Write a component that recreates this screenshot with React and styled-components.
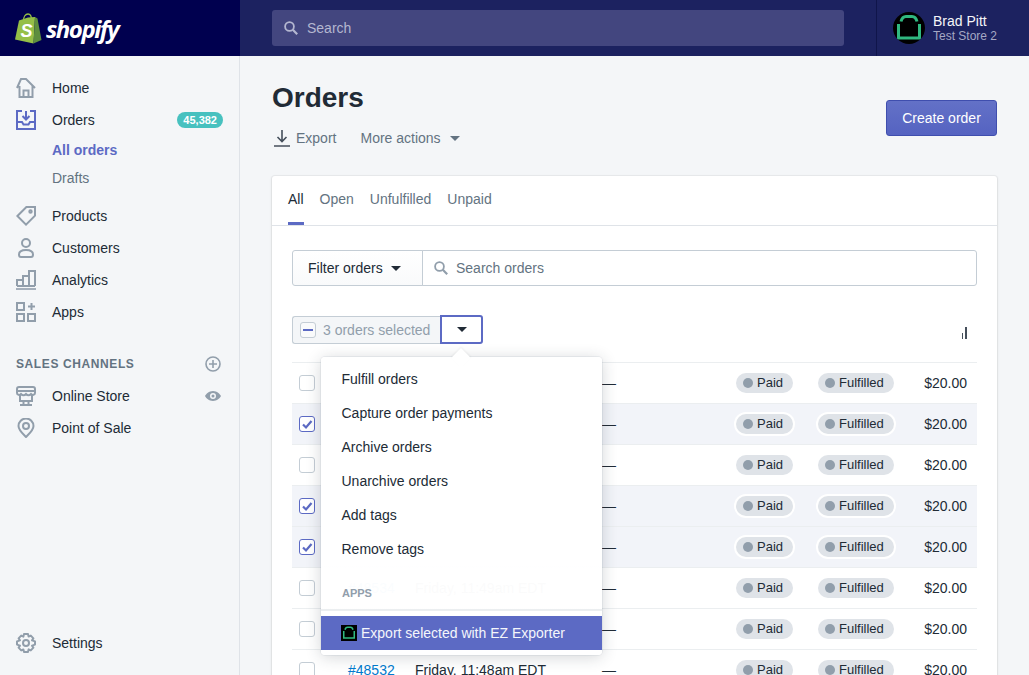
import styled, { createGlobalStyle } from "styled-components";

const GlobalStyle = createGlobalStyle`
  html, body {
    margin: 0;
    height: 100%;
    overflow: hidden;
    background: #f4f6f8;
    color: #212b36;
    font-family: "Liberation Sans", Arial, sans-serif;
    font-size: 14px;
  }
  * { box-sizing: border-box; }
`;

const HomeIcon = () => (
  <svg width="20" height="20" viewBox="0 0 20 20" fill="none" stroke="currentColor" strokeWidth="2">
    <path d="M1 10 L5 1 H10 L19 10 M3.5 8 V19 H16.5 V8 M7.5 19 V12.5 H12.5 V19" />
  </svg>
);
const OrdersIcon = () => (
  <svg width="20" height="20" viewBox="0 0 20 20" fill="none" stroke="currentColor" strokeWidth="2">
    <path d="M6 1 H1 V19 H19 V1 H14 M1 12 H6 L7.5 14.5 H12.5 L14 12 H19" />
    <path d="M10 1 V9 M6.5 6 L10 9.5 L13.5 6" />
  </svg>
);
const TagIcon = () => (
  <svg width="20" height="20" viewBox="0 0 20 20" fill="none" stroke="currentColor" strokeWidth="2">
    <path d="M1.4 10 L10.4 1 H19 V9.6 L10 18.6 Z" />
    <circle cx="14.5" cy="5.5" r="1.2" />
  </svg>
);
const PersonIcon = () => (
  <svg width="20" height="20" viewBox="0 0 20 20" fill="none" stroke="currentColor" strokeWidth="2">
    <circle cx="10" cy="5" r="4" />
    <path d="M3 16.5 C3 13.5 6 12 10 12 S17 13.5 17 16.5 C17 18.5 16 19 15 19 H5 C4 19 3 18.5 3 16.5 Z" />
  </svg>
);
const ChartIcon = () => (
  <svg width="20" height="20" viewBox="0 0 20 20" fill="none" stroke="currentColor" strokeWidth="2">
    <path d="M0 19 H20" strokeWidth="1.6" />
    <path d="M1 16 V10 H7 V16 M7 16 V6 H13 V16 M13 16 V1 H19 V16 M1 16 H19" />
  </svg>
);
const AppsIcon = () => (
  <svg width="20" height="20" viewBox="0 0 20 20" fill="none" stroke="currentColor" strokeWidth="2">
    <rect x="1" y="1" width="7" height="7" />
    <rect x="1" y="12" width="7" height="7" />
    <rect x="12" y="12" width="7" height="7" />
    <path d="M15.5 1 V8 M12 4.5 H19" />
  </svg>
);
const StoreIcon = () => (
  <svg width="20" height="20" viewBox="0 0 20 20" fill="none" stroke="currentColor" strokeWidth="2">
    <path d="M3 1 H17 C18.5 1 19 2 19 3 V7 C19 9 16.5 9.5 15 8 C13.5 9.5 11.5 9.5 10 8 C8.5 9.5 6.5 9.5 5 8 C3.5 9.5 1 9 1 7 V3 C1 2 1.5 1 3 1 Z" />
    <path d="M1 5 H19" />
    <path d="M4 9 V15 H16 V9 M4 19 H16 M7.5 15 V19 M12.5 15 V19" />
  </svg>
);
const PinIcon = () => (
  <svg width="20" height="20" viewBox="0 0 20 20" fill="none" stroke="currentColor" strokeWidth="2">
    <path d="M10 19 C6 15 2.5 12 2.5 8 A7.5 7.5 0 0 1 17.5 8 C17.5 12 14 15 10 19 Z" />
    <circle cx="10" cy="8" r="3" />
  </svg>
);
const GearIcon = () => (
  <svg width="20" height="20" viewBox="0 0 20 20" fill="none" stroke="currentColor" strokeWidth="2" strokeLinejoin="round">
    <path d="M8 1 H12 L12.6 3.6 L14.8 2.6 L17.4 5.4 L16 7.4 L19 8.4 V11.6 L16 12.6 L17.4 14.6 L14.8 17.4 L12.6 16.4 L12 19 H8 L7.4 16.4 L5.2 17.4 L2.6 14.6 L4 12.6 L1 11.6 V8.4 L4 7.4 L2.6 5.4 L5.2 2.6 L7.4 3.6 Z" />
    <circle cx="10" cy="10" r="3" />
  </svg>
);
const PlusCircle = () => (
  <svg width="16" height="16" viewBox="0 0 16 16" fill="none" stroke="currentColor" strokeWidth="1.6">
    <circle cx="8" cy="8" r="7" />
    <path d="M8 4 V12 M4 8 H12" />
  </svg>
);
const EyeIcon = () => (
  <svg width="16" height="16" viewBox="0 0 16 16" fill="currentColor">
    <path fillRule="evenodd" d="M8 3 C12 3 15 6 16 8 C15 10 12 13 8 13 C4 13 1 10 0 8 C1 6 4 3 8 3 Z M8 5 A3 3 0 1 0 8 11 A3 3 0 1 0 8 5 Z" />
    <circle cx="8" cy="8" r="1.5" />
  </svg>
);
const SearchIcon = ({ size = 14 }) => (
  <svg width={size} height={size} viewBox="0 0 14 14" fill="none" stroke="currentColor" strokeWidth="1.8">
    <circle cx="5.5" cy="5.5" r="4.4" />
    <path d="M8.8 8.8 L13.2 13.2" strokeWidth="2.2" />
  </svg>
);
const ExportIcon = () => (
  <svg width="16" height="17" viewBox="0 0 16 17" fill="none" stroke="currentColor" strokeWidth="1.6">
    <path d="M8 0 V11 M3.5 7 L8 11.5 L12.5 7 M0 16 H16" />
  </svg>
);
const CheckMark = () => (
  <svg width="12" height="12" viewBox="0 0 12 12" fill="none" stroke="#5c6ac4" strokeWidth="2.2">
    <path d="M2 6.5 L5 9.5 L10.5 3" />
  </svg>
);
const Arch = ({ size }) => (
  <svg width={size} height={size} viewBox="0 0 32 32" fill="none" stroke="#30b880" strokeWidth="3">
    <path d="M5.5 12 V26 H26.5 V12" />
    <path d="M8 9.5 C9 5.5 11 4.5 13 4.5 H19 C21 4.5 23 5.5 24 9.5" />
  </svg>
);
const BagLogo = () => (
  <svg width="27" height="31" viewBox="0 0 27 31">
    <path d="M8.5 8 C8.5 3.5 10.5 1 13 1 C15.5 1 16.5 3.5 16.5 7" fill="none" stroke="#95bf47" strokeWidth="1.3" />
    <path d="M0 26.5 L4 7.5 L13 4.5 L20 4 L18.5 30.5 Z" fill="#95bf47" />
    <path d="M20 4 L22.5 5.5 L26.5 27 L18.5 30.5 Z" fill="#5e8e3e" />
    <text x="5.5" y="24" fontFamily="Liberation Sans" fontWeight="700" fontStyle="italic" fontSize="18" fill="#fff">S</text>
  </svg>
);

const NAV_TOP = [
  { label: "Home", icon: <HomeIcon /> },
  { label: "Orders", icon: <OrdersIcon />, active: true, badge: "45,382" },
];
const NAV_REST = [
  { label: "Products", icon: <TagIcon /> },
  { label: "Customers", icon: <PersonIcon /> },
  { label: "Analytics", icon: <ChartIcon /> },
  { label: "Apps", icon: <AppsIcon /> },
];
const ACTIONS = ["Fulfill orders", "Capture order payments", "Archive orders", "Unarchive orders", "Add tags", "Remove tags"];
const ORDERS = [
  { id: 48539, date: "Friday, 11:53am EDT" },
  { id: 48538, date: "Friday, 11:52am EDT", selected: true },
  { id: 48537, date: "Friday, 11:51am EDT" },
  { id: 48536, date: "Friday, 11:50am EDT", selected: true },
  { id: 48535, date: "Friday, 11:50am EDT", selected: true },
  { id: 48534, date: "Friday, 11:49am EDT" },
  { id: 48533, date: "Friday, 11:49am EDT" },
  { id: 48532, date: "Friday, 11:48am EDT" },
];

const App = () => (
  <>
    <GlobalStyle />
    <Page>
      <TopBar>
        <Brand>
          <BagLogo />
          <Wordmark>shopify</Wordmark>
        </Brand>
        <SearchSlot>
          <GlobalSearch>
            <SearchIcon />
            Search
          </GlobalSearch>
        </SearchSlot>
        <Account>
          <Avatar>
            <Arch size={32} />
          </Avatar>
          <AccountText>
            <AccountName>Brad Pitt</AccountName>
            <StoreName>Test Store 2</StoreName>
          </AccountText>
        </Account>
      </TopBar>
      <Body>
        <Sidebar>
          {NAV_TOP.map((item) => (
            <NavItem key={item.label}>
              <NavIcon $active={item.active}>{item.icon}</NavIcon>
              {item.label}
              {item.badge && <Badge>{item.badge}</Badge>}
            </NavItem>
          ))}
          <SubItem $active>All orders</SubItem>
          <SubItem>Drafts</SubItem>
          <NavGroup>
            {NAV_REST.map((item) => (
              <NavItem key={item.label}>
                <NavIcon>{item.icon}</NavIcon>
                {item.label}
              </NavItem>
            ))}
          </NavGroup>
          <SectionHead>
            SALES CHANNELS
            <SideAction><PlusCircle /></SideAction>
          </SectionHead>
          <NavItem>
            <NavIcon><StoreIcon /></NavIcon>
            Online Store
            <SideAction><EyeIcon /></SideAction>
          </NavItem>
          <NavItem>
            <NavIcon><PinIcon /></NavIcon>
            Point of Sale
          </NavItem>
          <SettingsItem>
            <NavIcon><GearIcon /></NavIcon>
            Settings
          </SettingsItem>
        </Sidebar>
        <Main>
          <Header>
            <div>
              <Title>Orders</Title>
              <HeaderActions>
                <HeaderAction><ExportIcon />Export</HeaderAction>
                <HeaderAction>More actions<SmallCaret $color="#637381" /></HeaderAction>
              </HeaderActions>
            </div>
            <CreateButton>Create order</CreateButton>
          </Header>
          <Card>
            <Tabs>
              <Tab $active>All</Tab>
              <Tab>Open</Tab>
              <Tab>Unfulfilled</Tab>
              <Tab>Unpaid</Tab>
            </Tabs>
            <CardBody>
              <FilterBar>
                <FilterButton>Filter orders<SmallCaret $color="#212b36" /></FilterButton>
                <FilterSearch>
                  <SearchIcon />
                  Search orders
                </FilterSearch>
              </FilterBar>
              <BulkRow>
                <BulkLabel>
                  <Indeterminate />
                  3 orders selected
                </BulkLabel>
                <BulkCaret><SmallCaret $color="#212b36" /></BulkCaret>
                <ColumnGlyph>
                  <svg width="5" height="12" viewBox="0 0 5 12" fill="#454f5b">
                    <rect x="0" y="6" width="1" height="6" />
                    <rect x="3" y="0" width="2" height="12" />
                  </svg>
                </ColumnGlyph>
                <Menu>
                  <MenuArrow />
                  {ACTIONS.map((action) => (
                    <MenuItem key={action}>{action}</MenuItem>
                  ))}
                  <AppsSection>
                    <AppsLabel>APPS</AppsLabel>
                  </AppsSection>
                  <MenuFooter>
                    <ExportApp>
                      <AppIcon><Arch size={16} /></AppIcon>
                      Export selected with EZ Exporter
                    </ExportApp>
                  </MenuFooter>
                </Menu>
              </BulkRow>
              <Rows>
                {ORDERS.map((order) => (
                  <Row key={order.id} $selected={order.selected}>
                    <Checkbox $checked={order.selected}>
                      {order.selected && <CheckMark />}
                    </Checkbox>
                    <OrderLink>#{order.id}</OrderLink>
                    <span>{order.date}</span>
                    <span>—</span>
                    <span><Pill $ring={order.selected}><Dot />Paid</Pill></span>
                    <span><Pill $ring={order.selected}><Dot />Fulfilled</Pill></span>
                    <Amount>$20.00</Amount>
                  </Row>
                ))}
              </Rows>
            </CardBody>
          </Card>
        </Main>
      </Body>
    </Page>
  </>
);

const Page = styled.div`
  display: flex;
  flex-direction: column;
  height: 675px;
  overflow: hidden;
`;

const TopBar = styled.header`
  display: flex;
  flex: none;
  height: 56px;
  background: #1c2260;
`;

const Brand = styled.div`
  display: flex;
  align-items: center;
  gap: 4px;
  width: 240px;
  padding-left: 15px;
  background: #00004f;
`;

const Wordmark = styled.span`
  font-family: "Open Sans", sans-serif;
  font-size: 24px;
  font-weight: 700;
  font-style: italic;
  letter-spacing: -1.5px;
  color: #fff;
`;

const SearchSlot = styled.div`
  display: flex;
  align-items: center;
  flex: 1;
  padding: 0 32px;
`;

const GlobalSearch = styled.div`
  display: flex;
  align-items: center;
  gap: 9px;
  width: 100%;
  height: 36px;
  padding-left: 12px;
  border-radius: 3px;
  background: #43467f;
  color: #b4b7d0;
`;

const Account = styled.div`
  display: flex;
  align-items: center;
  gap: 8px;
  width: 153px;
  padding-left: 16px;
  border-left: 1px solid #10154a;
`;

const Avatar = styled.div`
  display: flex;
  width: 32px;
  height: 32px;
  border-radius: 50%;
  overflow: hidden;
  background: #000;
`;

const AccountText = styled.div`
  display: flex;
  flex-direction: column;
`;

const AccountName = styled.span`
  font-size: 14px;
  line-height: 16px;
  color: #f4f6f8;
`;

const StoreName = styled.span`
  font-size: 12px;
  line-height: 15px;
  color: #a5a8c4;
`;

const Body = styled.div`
  display: flex;
  flex: 1;
  min-height: 0;
`;

const Sidebar = styled.nav`
  display: flex;
  flex-direction: column;
  flex: none;
  width: 240px;
  padding: 16px 0;
  border-right: 1px solid #dfe3e8;
`;

const NavItem = styled.div`
  display: flex;
  align-items: center;
  flex: none;
  height: 32px;
  padding: 0 16px;
  color: #212b36;
`;

const NavGroup = styled.div`
  display: flex;
  flex-direction: column;
  margin-top: 8px;
`;

const SettingsItem = styled(NavItem)`
  margin-top: auto;
`;

const NavIcon = styled.span`
  display: flex;
  flex: none;
  width: 36px;
  color: ${(props) => (props.$active ? "#5c6ac4" : "#919eab")};
`;

const Badge = styled.span`
  margin-left: auto;
  padding: 0 6px;
  border-radius: 10px;
  background: #47c1bf;
  color: #fff;
  font-size: 11px;
  font-weight: 700;
  line-height: 16px;
`;

const SubItem = styled.div`
  flex: none;
  height: 28px;
  padding-left: 52px;
  line-height: 28px;
  font-weight: ${(props) => (props.$active ? 700 : 400)};
  color: ${(props) => (props.$active ? "#5c6ac4" : "#637381")};
`;

const SectionHead = styled.div`
  display: flex;
  align-items: center;
  flex: none;
  height: 32px;
  margin-top: 20px;
  padding: 0 16px;
  color: #637381;
  font-size: 12px;
  font-weight: 700;
  letter-spacing: 0.6px;
`;

const SideAction = styled.span`
  display: flex;
  margin-left: auto;
  margin-right: 2px;
  color: #919eab;
`;

const Main = styled.main`
  flex: 1;
  min-width: 0;
  padding: 24px 32px 0;
`;

const Header = styled.div`
  display: flex;
  justify-content: space-between;
  align-items: flex-start;
  padding-bottom: 22px;
`;

const Title = styled.h1`
  margin: 1px 0 0;
  font-size: 28px;
  font-weight: 700;
  line-height: 34px;
`;

const HeaderActions = styled.div`
  display: flex;
  gap: 24px;
  margin-top: 7px;
  padding-left: 2px;
`;

const HeaderAction = styled.div`
  display: flex;
  align-items: center;
  gap: 6px;
  height: 32px;
  color: #637381;
  svg { color: #454f5b; }
`;

const SmallCaret = styled.span`
  display: inline-block;
  width: 0;
  height: 0;
  margin-left: 3px;
  border-left: 5px solid transparent;
  border-right: 5px solid transparent;
  border-top: 5px solid ${(props) => props.$color};
`;

const CreateButton = styled.button`
  width: 111px;
  height: 36px;
  margin-top: 20px;
  border: 1px solid #3f4eae;
  border-radius: 3px;
  background: linear-gradient(180deg, #6371c7, #5563c1);
  color: #fff;
  font: inherit;
`;

const Card = styled.section`
  border-radius: 3px;
  background: #fff;
  box-shadow: 0 0 0 1px rgba(63, 63, 68, 0.05), 0 1px 3px rgba(63, 63, 68, 0.15);
`;

const Tabs = styled.div`
  display: flex;
  gap: 16px;
  height: 50px;
  padding: 0 16px;
  border-bottom: 1px solid #dfe3e8;
`;

const Tab = styled.div`
  height: 49px;
  padding-top: 15px;
  line-height: 16px;
  color: ${(props) => (props.$active ? "#212b36" : "#637381")};
  border-bottom: 3px solid ${(props) => (props.$active ? "#5c6ac4" : "transparent")};
`;

const CardBody = styled.div`
  padding: 24px 20px 0;
`;

const FilterBar = styled.div`
  display: flex;
  height: 36px;
`;

const FilterButton = styled.div`
  display: flex;
  align-items: center;
  gap: 5px;
  width: 131px;
  padding-left: 15px;
  border: 1px solid #c4cdd5;
  border-radius: 3px 0 0 3px;
  background: linear-gradient(180deg, #fff, #f9fafb);
`;

const FilterSearch = styled.div`
  display: flex;
  align-items: center;
  gap: 8px;
  flex: 1;
  margin-left: -1px;
  padding-left: 11px;
  border: 1px solid #c4cdd5;
  border-radius: 0 3px 3px 0;
  color: #637381;
  svg { color: #919eab; }
`;

const BulkRow = styled.div`
  position: relative;
  display: flex;
  height: 28px;
  margin-top: 30px;
`;

const BulkLabel = styled.div`
  display: flex;
  align-items: center;
  gap: 7px;
  width: 148px;
  padding-left: 7px;
  border: 1px solid #c4cdd5;
  border-right: 0;
  border-radius: 3px 0 0 3px;
  background: #f4f6f8;
  color: #919eab;
`;

const Indeterminate = styled.span`
  position: relative;
  width: 16px;
  height: 16px;
  border: 1px solid #c4cdd5;
  border-radius: 3px;
  background: #f9fafb;

  &::after {
    content: "";
    position: absolute;
    left: 2px;
    right: 2px;
    top: 6px;
    height: 2px;
    background: #5c6ac4;
  }
`;

const BulkCaret = styled.div`
  display: flex;
  align-items: center;
  justify-content: center;
  width: 43px;
  height: 29px;
  margin-top: -1px;
  border: 2px solid #5c6ac4;
  border-radius: 0 3px 3px 0;
  background: #fff;

  span { margin-left: 0; }
`;

const ColumnGlyph = styled.span`
  display: flex;
  align-items: center;
  margin: 5px 0 0 auto;
  padding-right: 10px;
`;

const Menu = styled.div`
  position: absolute;
  z-index: 2;
  left: 29px;
  top: 41px;
  width: 281px;
  height: 298px;
  padding: 5px 0;
  border-radius: 4px;
  background: linear-gradient(#fff 0 209px, rgba(255, 255, 255, 0.98) 209px);
  box-shadow: 0 0 0 1px rgba(6, 44, 82, 0.05), 0 2px 16px rgba(33, 43, 54, 0.2);
`;

const MenuArrow = styled.span`
  position: absolute;
  left: 133px;
  top: -6px;
  width: 14px;
  height: 14px;
  background: #fff;
  transform: rotate(45deg);
  box-shadow: -1px -1px 2px rgba(33, 43, 54, 0.06);
`;

const MenuItem = styled.div`
  position: relative;
  height: 34px;
  padding-left: 20.5px;
  line-height: 34px;
`;

const AppsSection = styled.div`
  height: 45px;
  padding: 20px 0 0 21px;
  border-bottom: 2px solid #ebeef0;
`;

const AppsLabel = styled.div`
  font-size: 11px;
  font-weight: 700;
  line-height: 14px;
  color: #919eab;
`;

const MenuFooter = styled.div`
  padding-top: 5px;
`;

const ExportApp = styled.div`
  display: flex;
  align-items: center;
  gap: 4px;
  height: 34px;
  padding-left: 20px;
  background: #5c6ac4;
  color: #f4f6fb;
`;

const AppIcon = styled.span`
  display: flex;
  background: #000;
`;

const Rows = styled.div`
  margin-top: 18px;
  border-top: 1px solid #ebeef0;
`;

const Row = styled.div`
  display: grid;
  grid-template-columns: 49px 67px 187px 134px 82px 1fr auto;
  align-items: center;
  height: 41px;
  padding: 0 10px 0 7px;
  border-bottom: 1px solid #ebeef0;
  background: ${(props) => (props.$selected ? "#f2f4f9" : "#fff")};
`;

const Checkbox = styled.span`
  display: flex;
  align-items: center;
  justify-content: center;
  width: 16px;
  height: 16px;
  border: 1px solid ${(props) => (props.$checked ? "#5c6ac4" : "#c4cdd5")};
  border-radius: 3px;
  background: #fff;
`;

const OrderLink = styled.span`
  color: #007ace;
`;

const Pill = styled.span`
  display: inline-flex;
  align-items: center;
  gap: 4px;
  height: 20px;
  padding: 0 10px 1px 7px;
  border-radius: 10px;
  background: #dfe3e8;
  font-size: 13px;
  color: #212b36;
  box-shadow: ${(props) => (props.$ring ? "0 0 0 2px #fff" : "none")};
`;

const Dot = styled.span`
  width: 10px;
  height: 10px;
  border-radius: 50%;
  background: #919eab;
`;

const Amount = styled.span`
  text-align: right;
`;

export default App;
